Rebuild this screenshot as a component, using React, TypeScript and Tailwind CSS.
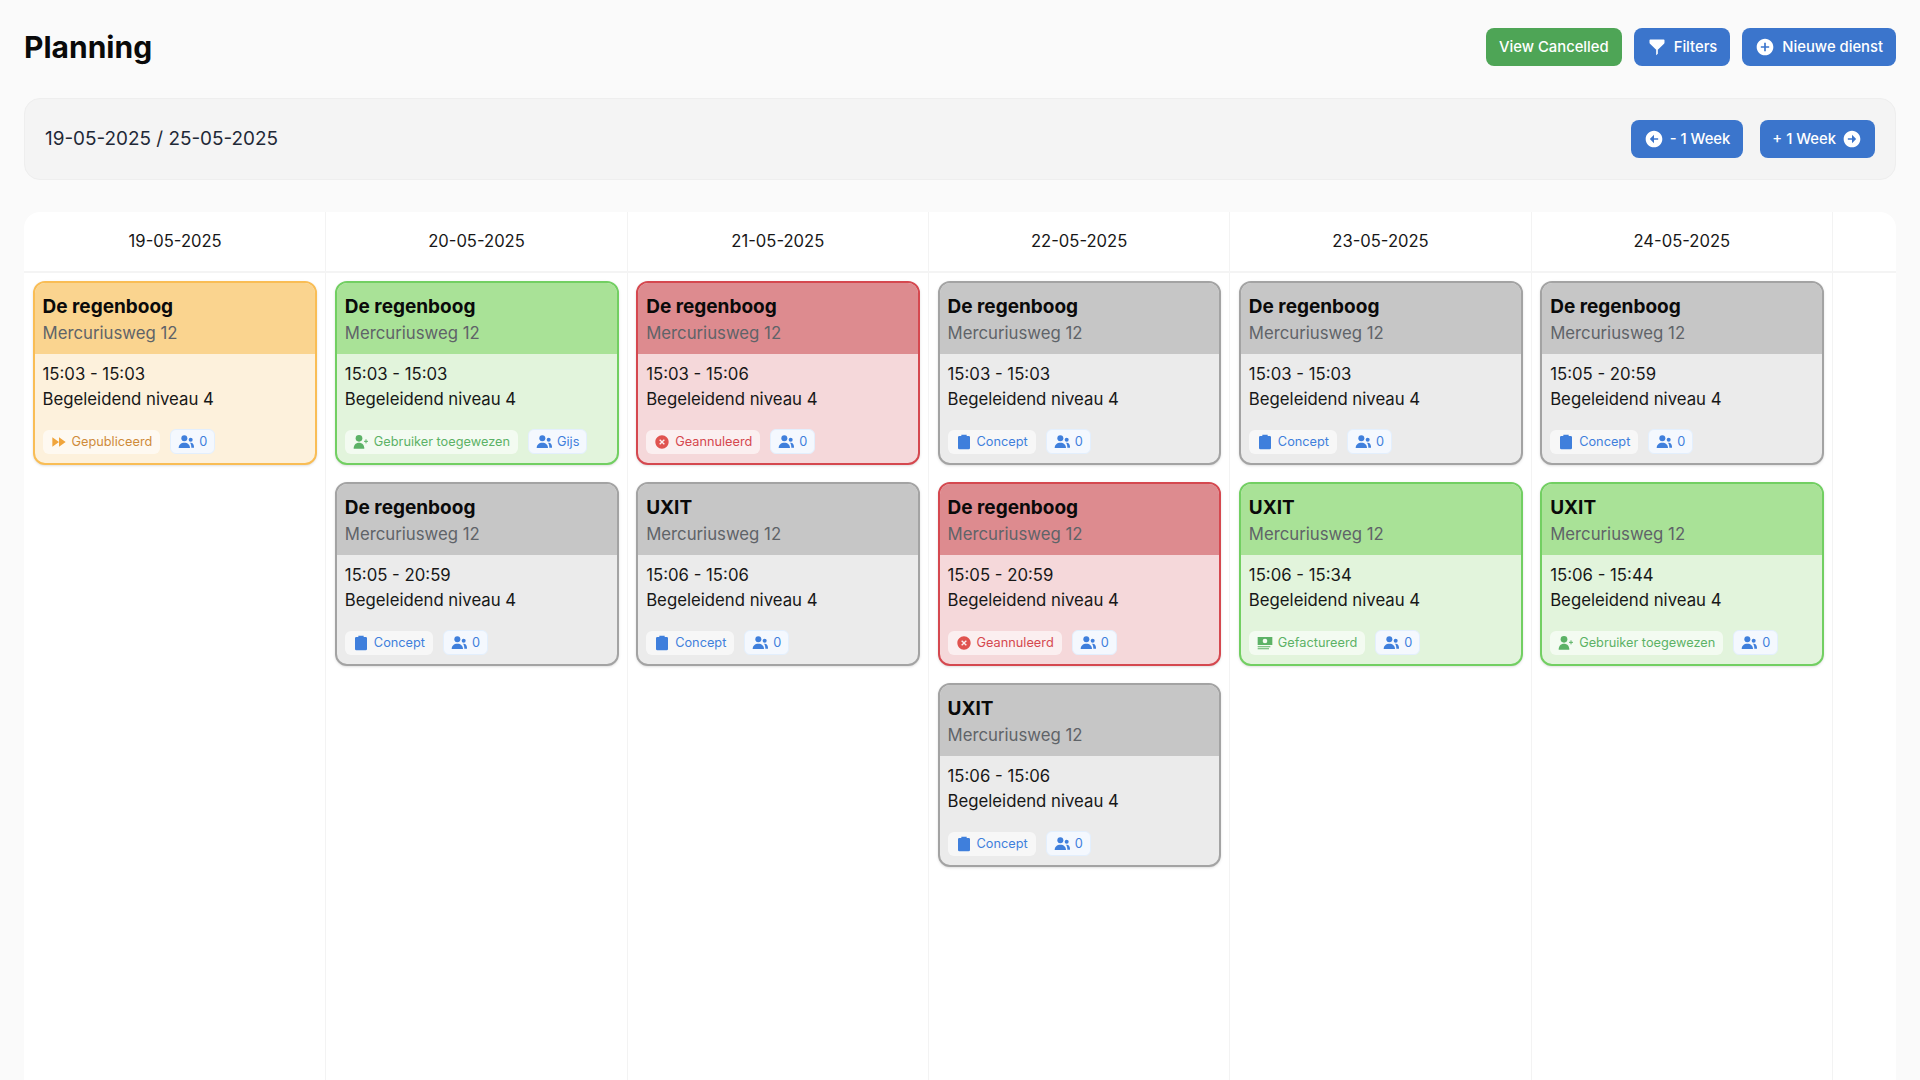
import React from "react";
import {
  BiSolidFilterAlt, BiSolidPlusCircle, BiSolidLeftArrowCircle, BiSolidRightArrowCircle,
  BiSolidXCircle,
} from "react-icons/bi";

type Status = "orange" | "green" | "red" | "gray";
type Kind = "pub" | "assigned" | "cancel" | "concept" | "invoice";

const tones: Record<Status, { box: string; head: string; body: string }> = {
  orange: { box: "border-[#f9bd55]", head: "bg-[#fad48f]", body: "bg-[#fdf1dc]" },
  green: { box: "border-[#72cf62]", head: "bg-[#a9e297]", body: "bg-[#e2f4dc]" },
  red: { box: "border-[#d5484f]", head: "bg-[#dd8b8f]", body: "bg-[#f5d8da]" },
  gray: { box: "border-[#a3a3a3]", head: "bg-[#c6c6c6]", body: "bg-[#ebebeb]" },
};

function Money() {
  return (
    <svg viewBox="0 0 24 24" className="h-4 w-4" fill="currentColor">
      <path d="M1 3h22v12H1z M12 5.5a3.5 3.5 0 100 7 3.5 3.5 0 000-7z" fillRule="evenodd" />
      <path d="M1 17h19v1.5H1z M1 20h17v1.5H1z" />
    </svg>
  );
}

function Forward() {
  return (
    <svg viewBox="0 0 24 24" className="h-4 w-4" fill="currentColor">
      <path d="M2 5l10 7-10 7z M12 5l10 7-10 7z" />
    </svg>
  );
}

function Clipboard() {
  return (
    <svg viewBox="0 0 24 24" className="h-4 w-4" fill="currentColor">
      <path d="M8 1h8v2h3a2 2 0 012 2v16a2 2 0 01-2 2H5a2 2 0 01-2-2V5a2 2 0 012-2h3z" />
    </svg>
  );
}

function Users() {
  return (
    <svg viewBox="0 0 24 24" className="h-4 w-4" fill="currentColor">
      <circle cx="9.5" cy="6.5" r="4.5" />
      <path d="M1 21c0-5 3.5-8 8.5-8s8.5 3 8.5 8z" />
      <circle cx="19" cy="8.5" r="3" />
      <path d="M18 13.2c3.5-.6 6 2 6 6v1.300h-4c0-3-.5-5.400-2-7.300z" />
    </svg>
  );
}

function UserPlus() {
  return (
    <svg viewBox="0 0 24 24" className="h-4 w-4" fill="currentColor">
      <circle cx="9" cy="6.500" r="5" />
      <path d="M1 22c0-6 3.500-9 8-9s8 3 8 9z" />
      <path d="M19.500 8v6 M16.500 11h6" stroke="currentColor" strokeWidth="1.500" fill="none" />
    </svg>
  );
}

const badges: Record<Kind, { label: string; cls: string; icon: React.ReactNode }> = {
  pub: { label: "Gepubliceerd", cls: "text-[#cf8b3a]", icon: <span className="text-[#f0a53c]"><Forward /></span> },
  assigned: { label: "Gebruiker toegewezen", cls: "text-[#5cb266]", icon: <UserPlus /> },
  cancel: { label: "Geannuleerd", cls: "text-[#d5484f]", icon: <BiSolidXCircle className="h-4 w-4 text-[#e0534f]" /> },
  concept: { label: "Concept", cls: "text-[#3f7fdc]", icon: <Clipboard /> },
  invoice: { label: "Gefactureerd", cls: "text-[#5cb266]", icon: <Money /> },
};

function Card({ title, status, time, kind, person = "0" }: { title: string; status: Status; time: string; kind: Kind; person?: string }) {
  const t = tones[status];
  const b = badges[kind];
  return (
    <div className={`h-[184px] overflow-hidden rounded-xl border-2 shadow-sm ${t.box} ${t.body}`}>
      <div className={`h-[71px] px-2 pt-[10px] ${t.head}`}>
        <div className="text-[19px] font-bold leading-[28px] text-[#0a0a0a]">{title}</div>
        <div className="mt-[-1px] text-[16.750px] leading-[26px] text-[#5f6368]">Mercuriusweg 12</div>
      </div>
      <div className="px-2 pt-[8px]">
        <div className="text-[16.750px] leading-[25px] text-[#171717]">{time}</div>
        <div className="text-[16.750px] leading-[25px] text-[#171717]">Begeleidend niveau 4</div>
        <div className="mt-[17px] flex items-center gap-[10px]">
          <span className={`flex h-[24px] items-center gap-[5px] rounded-md bg-white/60 px-[8px] text-[12.750px] font-normal ${b.cls}`}>
            {b.icon}
            {b.label}
          </span>
          <span className="flex h-[25px] items-center gap-[5px] rounded-md border border-[#e3effd] bg-[#f4f8fe] px-[7px] text-[12.750px] font-normal text-[#3f7fdc]">
            <Users />
            {person}
          </span>
        </div>
      </div>
    </div>
  );
}

const columns: { date: string; cards: { title: string; status: Status; time: string; kind: Kind; person?: string }[] }[] = [
  { date: "19-05-2025", cards: [{ title: "De regenboog", status: "orange", time: "15:03 - 15:03", kind: "pub" }] },
  { date: "20-05-2025", cards: [
    { title: "De regenboog", status: "green", time: "15:03 - 15:03", kind: "assigned", person: "Gijs" },
    { title: "De regenboog", status: "gray", time: "15:05 - 20:59", kind: "concept" },
  ] },
  { date: "21-05-2025", cards: [
    { title: "De regenboog", status: "red", time: "15:03 - 15:06", kind: "cancel" },
    { title: "UXIT", status: "gray", time: "15:06 - 15:06", kind: "concept" },
  ] },
  { date: "22-05-2025", cards: [
    { title: "De regenboog", status: "gray", time: "15:03 - 15:03", kind: "concept" },
    { title: "De regenboog", status: "red", time: "15:05 - 20:59", kind: "cancel" },
    { title: "UXIT", status: "gray", time: "15:06 - 15:06", kind: "concept" },
  ] },
  { date: "23-05-2025", cards: [
    { title: "De regenboog", status: "gray", time: "15:03 - 15:03", kind: "concept" },
    { title: "UXIT", status: "green", time: "15:06 - 15:34", kind: "invoice" },
  ] },
  { date: "24-05-2025", cards: [
    { title: "De regenboog", status: "gray", time: "15:05 - 20:59", kind: "concept" },
    { title: "UXIT", status: "green", time: "15:06 - 15:44", kind: "assigned" },
  ] },
];

const btn = "flex h-[38px] items-center rounded-lg text-[14.800px] font-medium text-white";

export default function App() {
  return (
    <div className="h-[1080px] overflow-hidden bg-[#fafafa] px-6 font-['Inter',sans-serif]">
      <div className="flex h-[98px] items-start justify-between pt-[28px]">
        <h1 className="text-[30px] font-bold leading-[38px] text-[#0a0a0a]">Planning</h1>
        <div className="flex gap-[12px]">
          <button className={`${btn} bg-[#4ea556] px-[13px]`}>View Cancelled</button>
          <button className={`${btn} gap-[7px] bg-[#3b75cc] px-[13px]`}><BiSolidFilterAlt className="h-5 w-5" />Filters</button>
          <button className={`${btn} gap-[7px] bg-[#3b75cc] px-[13px]`}><BiSolidPlusCircle className="h-5 w-5" />Nieuwe dienst</button>
        </div>
      </div>
      <div className="flex h-[82px] items-center justify-between rounded-2xl border border-[#eeeeee] bg-[#f4f4f4] px-[20px]">
        <div className="text-[18.900px] text-[#1f2937]">19-05-2025 / 25-05-2025</div>
        <div className="flex gap-[17px]">
          <button className={`${btn} gap-[6px] bg-[#3b75cc] px-[13px]`}><BiSolidLeftArrowCircle className="h-5 w-5" />- 1 Week</button>
          <button className={`${btn} gap-[6px] bg-[#3b75cc] pl-[12px] pr-[13px]`}>+ 1 Week<BiSolidRightArrowCircle className="h-5 w-5" /></button>
        </div>
      </div>
      <div className="mt-[32px] h-[900px] overflow-hidden rounded-t-2xl bg-white">
        <div className="grid h-[61px] grid-cols-[repeat(6,1fr)_64px] border-b-2 border-[#f4f4f4]">
          {columns.map((c) => (
            <div key={c.date} className="flex items-center justify-center border-l border-[#f3f3f3] text-[16.600px] text-[#171717] first:border-l-transparent">{c.date}</div>
          ))}
          <div className="border-l border-[#f3f3f3]" />
        </div>
        <div className="grid h-full grid-cols-[repeat(6,1fr)_64px]">
          {columns.map((c) => (
            <div key={c.date} className="flex flex-col gap-[17px] border-l border-[#f3f3f3] pl-[8.500px] pr-[8px] pt-[8px] first:border-l-0">
              {c.cards.map((card, i) => <Card key={i} {...card} />)}
            </div>
          ))}
          <div className="border-l border-[#f3f3f3]" />
        </div>
      </div>
    </div>
  );
}
